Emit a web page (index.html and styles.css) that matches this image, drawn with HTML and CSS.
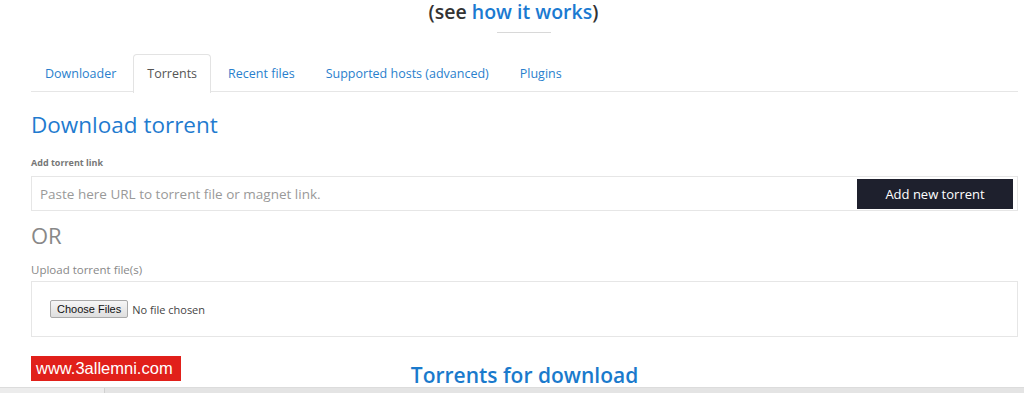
FILE: index.html
```html
<!DOCTYPE html>
<html lang="en">
<head>
  <meta charset="UTF-8">
  <title>Torrents</title>
  <link rel="stylesheet" href="styles.css">
</head>
<body>
  <header class="intro">
    <p class="intro-text">(see <a class="intro-link" href="#">how it works</a>)</p>
    <div class="intro-rule"></div>
  </header>

  <main class="main">
    <nav class="tabs">
      <a class="tab" href="#">Downloader</a>
      <a class="tab active" href="#">Torrents</a>
      <a class="tab" href="#">Recent files</a>
      <a class="tab" href="#">Supported hosts (advanced)</a>
      <a class="tab" href="#">Plugins</a>
    </nav>

    <h2 class="page-title">Download torrent</h2>

    <label class="field-label">Add torrent link</label>
    <div class="link-box">
      <input class="link-input" type="text" placeholder="Paste here URL to torrent file or magnet link.">
      <button class="btn-add">Add new torrent</button>
    </div>

    <div class="or">OR</div>

    <label class="upload-label">Upload torrent file(s)</label>
    <div class="upload-box">
      <span class="file-btn">Choose Files</span>
      <span class="file-status">No file chosen</span>
    </div>

    <h3 class="section-title">Torrents for download</h3>
  </main>

  <div class="watermark">www.3allemni.com</div>
  <div class="scrollbar"><span class="thumb"></span></div>
</body>
</html>
```

FILE: styles.css
```css
body {
  font-family: "Open Sans", Arial, sans-serif;
  margin: 0;
  padding: 0;
  background: #fff;
  color: #333;
  overflow: hidden;
}

/* Intro */
.intro {
  display: flex;
  flex-direction: column;
  align-items: center;
  padding-top: 1px;
}

.intro-text {
  margin: 0;
  font-size: 19.5px;
  font-weight: 600;
  line-height: 22px;
  color: #333;
  margin-left: 3px;
}

.intro-link {
  color: #1b7ad1;
  text-decoration: none;
}

.intro-rule {
  width: 54px;
  height: 1px;
  background: #d8d8d8;
  margin-top: 9px;
  margin-left: 24px;
}

/* Content */
.main {
  padding: 21px 6px 0 31px;
}

.tabs {
  display: flex;
  border-bottom: 1px solid #e6e6e6;
  height: 37px;
}

.tab {
  display: block;
  font-size: 12.5px;
  color: #2a7fcd;
  text-decoration: none;
  padding: 0 13px;
  margin-right: 3px;
  line-height: 37px;
  border: 1px solid transparent;
  border-bottom: none;
  border-radius: 4px 4px 0 0;
}

.tab.active {
  color: #555;
  border-color: #e3e3e3;
  background: #fff;
  margin-bottom: -1px;
  height: 38px;
}

.page-title {
  margin: 17px 0 0;
  font-size: 22.5px;
  font-weight: 400;
  line-height: 32px;
  color: #1f7bcf;
}

.field-label {
  display: block;
  margin-top: 16px;
  font-size: 9px;
  font-weight: 700;
  color: #777;
  line-height: 12px;
}

.link-box {
  display: flex;
  align-items: center;
  margin-top: 7px;
  height: 33px;
  border: 1px solid #e6e6e6;
  padding-right: 4px;
}

.link-input {
  flex: 1;
  border: none;
  outline: none;
  font-family: "Open Sans", Arial, sans-serif;
  font-size: 13.5px;
  padding: 0 8px;
  height: 100%;
  background: transparent;
}

.link-input::placeholder {
  color: #999;
}

.btn-add {
  width: 156px;
  height: 30px;
  border: none;
  background: #1e202d;
  color: #fff;
  font-family: "Open Sans", Arial, sans-serif;
  font-size: 13px;
}

.or {
  margin-top: 10px;
  font-size: 22px;
  line-height: 28px;
  color: #888;
}

.upload-label {
  display: block;
  margin-top: 14px;
  font-size: 11.5px;
  line-height: 14px;
  color: #888;
}

.upload-box {
  display: flex;
  align-items: center;
  margin-top: 4px;
  height: 54px;
  border: 1px solid #e6e6e6;
  padding-left: 18px;
}

.file-btn {
  font-family: Arial, "Liberation Sans", sans-serif;
  font-size: 11px;
  color: #111;
  padding: 2px 6px;
  border: 1px solid #a9a9a9;
  border-radius: 2px;
  background: linear-gradient(#f6f6f6, #dedede);
}

.file-status {
  font-size: 11px;
  color: #444;
  margin-left: 4px;
}

.section-title {
  margin: 23px 0 0;
  text-align: center;
  font-size: 21px;
  font-weight: 600;
  color: #1a7acc;
  line-height: 30px;
}

/* Overlays */
.watermark {
  position: absolute;
  left: 31px;
  top: 356px;
  width: 150px;
  height: 25px;
  background: #e1201a;
  color: #fff;
  font-family: Arial, "Liberation Sans", sans-serif;
  font-size: 16.5px;
  line-height: 25px;
  text-indent: 5px;
}

.scrollbar {
  position: fixed;
  left: 0;
  right: 0;
  bottom: 0;
  height: 5px;
  background: #e4e4e4;
  border-top: 1px solid #dcdcdc;
}

.thumb {
  display: block;
  width: 104px;
  height: 5px;
  background: #ececec;
  border-right: 1px solid #d0d0d0;
}
```
